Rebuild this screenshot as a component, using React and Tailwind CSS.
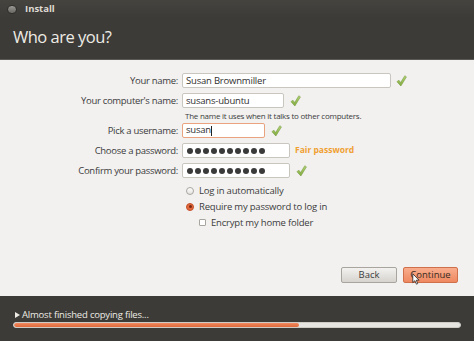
import React from 'react';

const font = { fontFamily: '"Open Sans", "Noto Sans", sans-serif' };

const Check = ({ className = '' }) => (
  <svg viewBox="0 0 12 13" className={`w-[11px] h-[12px] ${className}`}>
    <defs>
      <linearGradient id="chk" x1="0" y1="0" x2="0" y2="1">
        <stop offset="0" stopColor="#b7d77a" />
        <stop offset="1" stopColor="#7fa93c" />
      </linearGradient>
    </defs>
    <path
      d="M1 7.2 L3.2 5.6 L5 8.2 L9.6 0.8 L11.4 2 L5.3 12 Z"
      fill="url(#chk)"
      stroke="#74993a"
      strokeWidth="0.6"
      strokeLinejoin="round"
    />
  </svg>
);

const Dots = ({ n = 10 }) => (
  <div className="flex items-center gap-[2px] pl-[4px]">
    {Array.from({ length: n }).map((_, i) => (
      <span key={i} className="w-[6px] h-[6px] rounded-full bg-[#3a3a3a]" />
    ))}
  </div>
);

const Field = ({ label, width, focused, children, after }) => (
  <div className="flex items-center h-[15px]">
    <div className="w-[181px] pr-[3px] text-right text-[9.5px] tracking-[-0.3px] text-[#3c3c3c] leading-none">{label}</div>
    <div
      className={`ml-[1px] h-[15px] flex items-center bg-white rounded-[2px] border ${
        focused ? 'border-[#e9a37f]' : 'border-[#c9c6c0]'
      }`}
      style={{ width }}
    >
      {children}
    </div>
    {after}
  </div>
);

const InputText = ({ children }) => (
  <span className="pl-[3px] text-[9.5px] tracking-[-0.2px] text-[#2f2f2f] leading-none">{children}</span>
);

export default function App() {
  return (
    <div className="w-[474px] h-[341px] flex flex-col bg-[#3c3b37] overflow-hidden relative" style={font}>
      {/* title bar */}
      <div className="h-[18px] flex items-center bg-gradient-to-b from-[#45443f] to-[#3c3b37]">
        <span className="ml-[7px] w-[10px] h-[9px] rounded-full bg-gradient-to-b from-[#9a9893] to-[#6a6863] border border-[#2e2d2a]" />
        <span className="ml-[8px] text-[9.5px] font-bold text-[#dfdbd2] leading-none">Install</span>
      </div>

      {/* header */}
      <div className="h-[42px] flex items-center pl-[13px] border-b border-[#5a5955]">
        <span className="text-[16.5px] tracking-[-0.5px] text-[#eeebe5] leading-none -mt-[2px]">Who are you?</span>
      </div>

      {/* content */}
      <div className="h-[236px] bg-[#f2f1f0] flex flex-col pt-[13px] relative">
        <Field label="Your name:" width={209} after={<Check className="ml-[5px]" />}>
          <InputText>Susan Brownmiller</InputText>
        </Field>
        <div className="h-[5px]" />
        <Field label="Your computer's name:" width={102} after={<Check className="ml-[6px] mt-[1px]" />}>
          <InputText>susans-ubuntu</InputText>
        </Field>
        <div className="h-[15px] pl-[185px] flex items-center text-[8px] tracking-[-0.25px] text-[#3c3c3c] leading-none">
          The name it uses when it talks to other computers.
        </div>
        <Field label="Pick a username:" width={83} focused after={<Check className="ml-[6px]" />}>
          <InputText>
            susan<span className="inline-block w-[1px] h-[10px] bg-[#222] align-middle" />
          </InputText>
        </Field>
        <div className="h-[5px]" />
        <Field
          label="Choose a password:"
          width={108}
          after={<span className="ml-[5px] text-[8.5px] font-bold text-[#f0a030] leading-none">Fair password</span>}
        >
          <Dots />
        </Field>
        <div className="h-[5px]" />
        <Field label="Confirm your password:" width={108} after={<Check className="ml-[6px]" />}>
          <Dots />
        </Field>

        <div className="pl-[186px] mt-[7px] flex flex-col gap-[5px] text-[9.5px] tracking-[-0.2px] text-[#3c3c3c] leading-none">
          <div className="flex items-center h-[11px]">
            <span className="w-[8px] h-[8px] rounded-full border border-[#a9a6a0] bg-gradient-to-b from-white to-[#e4e2de]" />
            <span className="ml-[5px]">Log in automatically</span>
          </div>
          <div className="flex items-center h-[11px]">
            <span className="w-[8px] h-[8px] rounded-full border border-[#c1512b] bg-[#e4683c] flex items-center justify-center">
              <span className="w-[3px] h-[3px] rounded-full bg-[#7a2a12]" />
            </span>
            <span className="ml-[5px]">Require my password to log in</span>
          </div>
          <div className="flex items-center h-[11px] pl-[13px]">
            <span className="w-[7px] h-[7px] rounded-[1px] border border-[#a9a6a0] bg-white" />
            <span className="ml-[5px]">Encrypt my home folder</span>
          </div>
        </div>

        <div className="mt-auto mb-[13px] flex justify-end pr-[16px] gap-[6px]">
          <button className="w-[56px] h-[16px] rounded-[2px] border border-[#a8a59f] bg-gradient-to-b from-[#f3f2f0] to-[#d6d3ce] text-[9.5px] text-[#3c3c3c] leading-none">
            Back
          </button>
          <button className="w-[55px] h-[16px] rounded-[2px] border border-[#d0704a] bg-gradient-to-b from-[#f8ad8c] to-[#ee8860] text-[9.5px] text-[#3a2a22] leading-none">
            Continue
          </button>
        </div>
        <svg viewBox="0 0 10 15" className="absolute w-[8px] h-[12px] left-[412px] top-[213px]">
          <path d="M1 1 L1 12 L3.6 9.6 L5.6 14 L7.2 13.2 L5.3 9 L8.8 9 Z" fill="#fff" stroke="#111" strokeWidth="0.9" strokeLinejoin="round" />
        </svg>
      </div>

      {/* bottom progress */}
      <div className="flex-1 bg-[#3c3b37] pl-[13px] pr-[13px] pt-[14px]">
        <div className="flex items-center h-[9px] text-[9.5px] tracking-[-0.2px] text-[#eeebe5] leading-none">
          <span className="ml-[2px] w-0 h-0 border-y-[3px] border-y-transparent border-l-[5px] border-l-[#eeebe5]" />
          <span className="ml-[2px]">Almost finished copying files...</span>
        </div>
        <div className="mt-[3px] h-[6px] rounded-full bg-[#e6e5e1] border border-[#cfccc6] overflow-hidden">
          <div className="h-full rounded-full bg-gradient-to-b from-[#f08a5d] to-[#e0683a]" style={{ width: '64%' }} />
        </div>
      </div>
    </div>
  );
}
